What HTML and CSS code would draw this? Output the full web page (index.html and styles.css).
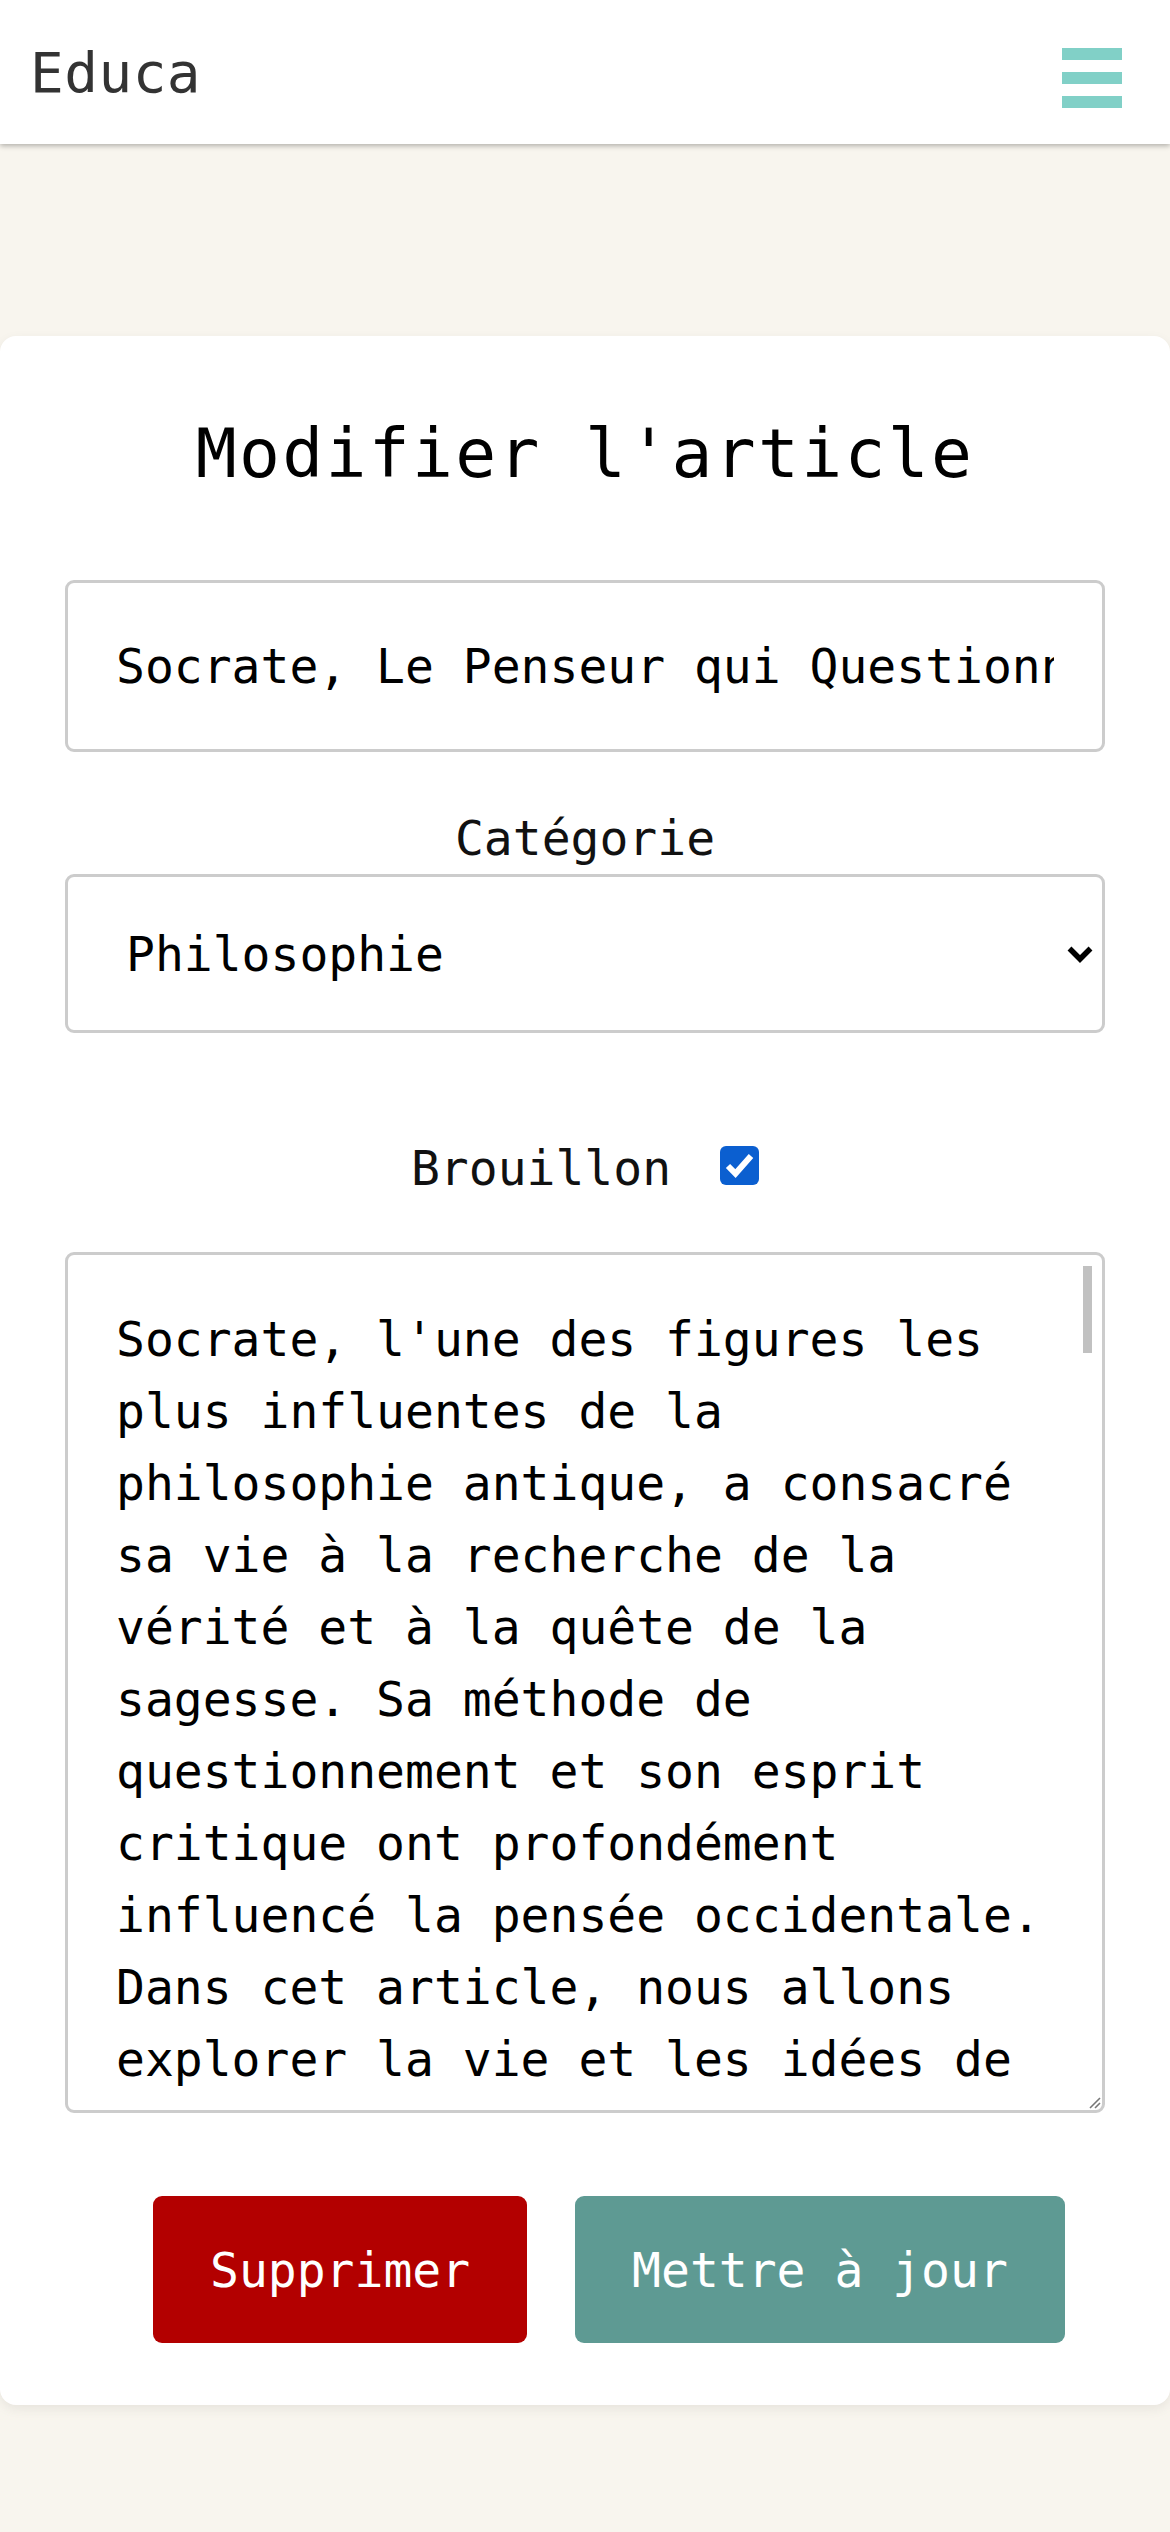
FILE: index.html
```html
<!DOCTYPE html>
<html lang="fr">
<head>
<meta charset="utf-8">
<title>Educa - Modifier l'article</title>
<link rel="stylesheet" href="styles.css">
</head>
<body>
<header class="topbar">
  <span class="brand">Educa</span>
  <button class="menu" type="button" aria-label="Menu">
    <span class="bar"></span><span class="bar"></span><span class="bar"></span>
  </button>
</header>
<main class="page">
  <section class="card">
    <h1 class="title">Modifier l'article</h1>
    <form class="form">
      <input class="field text-input" type="text" value="Socrate, Le Penseur qui Questionne">
      <label class="label" for="cat">Catégorie</label>
      <div class="select-wrap">
        <select id="cat" class="field select"><option>Philosophie</option></select>
        <svg class="chevron" width="28" height="18" viewBox="0 0 28 18"><polyline points="3.5,3.5 14,14 24.5,3.5" fill="none" stroke="#000" stroke-width="5.5"/></svg>
      </div>
      <div class="draft-row">
        <span class="draft-label">Brouillon</span>
        <span class="check" role="checkbox" aria-checked="true">
          <svg width="39" height="39" viewBox="0 0 39 39"><polyline points="8,20 15.5,27.5 31,10" fill="none" stroke="#fff" stroke-width="6"/></svg>
        </span>
      </div>
      <div class="area-wrap">
        <textarea class="field area">Socrate, l'une des figures les plus influentes de la philosophie antique, a consacré sa vie à la recherche de la vérité et à la quête de la sagesse. Sa méthode de questionnement et son esprit critique ont profondément influencé la pensée occidentale. Dans cet article, nous allons explorer la vie et les idées de Socrate.</textarea>
        <span class="thumb"></span>
        <svg class="grip" width="12" height="12" viewBox="0 0 12 12"><line x1="1" y1="11" x2="11" y2="1" stroke="#777" stroke-width="1.6"/><line x1="6" y1="11" x2="11" y2="6" stroke="#777" stroke-width="1.6"/></svg>
      </div>
      <div class="actions">
        <button class="btn btn-danger" type="button">Supprimer</button>
        <button class="btn btn-primary" type="submit">Mettre à jour</button>
      </div>
    </form>
  </section>
</main>
</body>
</html>
```
FILE: styles.css
```css
* { box-sizing: border-box; }
html, body { margin: 0; padding: 0; }
body {
  background: #f8f5ee;
  font-family: "DejaVu Sans Mono", monospace;
  color: #000;
  min-height: 2532px;
}
.topbar {
  height: 144px;
  background: #fff;
  display: flex;
  align-items: center;
  justify-content: space-between;
  padding: 0 48px 0 30px;
  box-shadow: 0 2px 5px rgba(0, 0, 0, 0.28);
  position: relative;
  z-index: 1;
}
.brand {
  font-size: 56px;
  letter-spacing: 0.5px;
  color: #333;
}
.menu {
  background: none;
  border: 0;
  padding: 0;
  margin-top: 12px;
  display: flex;
  flex-direction: column;
  gap: 12px;
}
.bar {
  display: block;
  width: 60px;
  height: 12px;
  background: #81d0c7;
}
.page {
  padding-top: 192px;
}
.card {
  background: #fff;
  border-radius: 16px;
  padding: 78px 65px 62px;
  box-shadow: 0 4px 12px rgba(0, 0, 0, 0.07);
}
.title {
  margin: 0;
  text-align: center;
  font-weight: normal;
  font-size: 68px;
  letter-spacing: 2.3px;
  line-height: 79px;
}
.form {
  display: flex;
  flex-direction: column;
  margin-top: 87px;
}
.field {
  font-family: "DejaVu Sans Mono", monospace;
  font-size: 48px;
  color: #000;
  background: #fff;
  border: 3px solid #ccc;
  border-radius: 9px;
  width: 100%;
  outline: none;
}
.text-input {
  height: 172px;
  padding: 0 48px;
}
.label {
  margin-top: 58px;
  text-align: center;
  font-size: 48px;
  line-height: 56px;
  color: #111;
}
.select-wrap {
  position: relative;
  margin-top: 8px;
}
.select {
  display: block;
  height: 159px;
  padding: 0 60px 0 58px;
  appearance: none;
  -webkit-appearance: none;
}
.chevron {
  position: absolute;
  right: 11px;
  top: 71px;
}
.draft-row {
  margin-top: 107px;
  display: flex;
  justify-content: center;
  align-items: flex-start;
  gap: 49px;
  font-size: 48px;
  line-height: 56px;
  color: #111;
}
.check {
  width: 39px;
  height: 39px;
  margin-top: 6px;
  border-radius: 6px;
  background: #0b5fd0;
  display: flex;
}
.area-wrap {
  position: relative;
  margin-top: 56px;
}
.area {
  display: block;
  height: 861px;
  padding: 48px;
  line-height: 72px;
  resize: none;
  overflow: hidden;
}
.thumb {
  position: absolute;
  right: 13px;
  top: 14px;
  width: 9px;
  height: 87px;
  background: #c1c1c1;
}
.grip {
  position: absolute;
  right: 4px;
  bottom: 4px;
}
.actions {
  margin-top: 83px;
  display: flex;
  gap: 48px;
  padding-left: 88px;
}
.btn {
  font-family: "DejaVu Sans Mono", monospace;
  font-size: 48px;
  line-height: 56px;
  height: 147px;
  padding: 0 57px;
  border: 0;
  border-radius: 9px;
  color: #fff;
}
.btn-danger { background: #b30000; }
.btn-primary { background: #5e9a93; }
```
